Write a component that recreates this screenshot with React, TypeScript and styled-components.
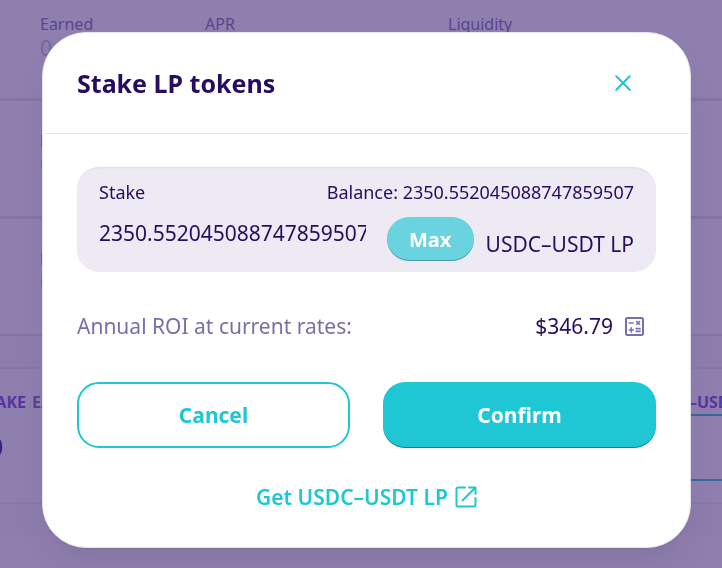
import React, { useState } from 'react';
import styled, { createGlobalStyle } from 'styled-components';

const colors = {
  text: '#280d5f',
  subtle: '#7a6eaa',
  primary: '#1fc7d4',
  secondary: '#7645d9',
  disabled: '#bdc2c4',
  border: '#e7e3eb',
  input: '#eeeaf4',
};

const GlobalStyle = createGlobalStyle`
  *, *::before, *::after { box-sizing: border-box; }
  body {
    margin: 0;
    background: #fff;
    color: ${colors.text};
    font-family: 'Noto Sans', 'Open Sans', sans-serif;
  }
  button, input { font-family: inherit; }
`;

/* Farm list behind the dialog */

const Page = styled.main`
  height: 100vh;
  overflow: hidden;
  font-size: 16px;
  line-height: 24px;
`;

const FarmRow = styled.section<{ $first?: boolean; $open?: boolean }>`
  display: grid;
  grid-template-columns: 165px 243px 1fr;
  align-items: start;
  height: ${p => (p.$first ? 101 : p.$open ? 117 : 118)}px;
  padding: ${p => (p.$first ? 12 : 28)}px 0 0 40px;
  border-bottom: ${p => (p.$open ? 2 : 3)}px solid ${colors.border};
`;

const Label = styled.div`
  color: ${colors.subtle};
`;

const Faint = styled.div`
  color: ${colors.disabled};
  font-size: 21px;
`;

const Details = styled.section`
  padding: 31px 0;
  background: #faf9fa;
`;

const DetailsGrid = styled.div`
  display: grid;
  grid-template-columns: 646px 1fr;
  height: 137px;
  padding-top: 21px;
  background: #fff;
  border: solid ${colors.input};
  border-width: 2px 0;
  font-weight: 700;
  white-space: nowrap;
`;

const EarnedTitle = styled.div`
  display: flex;
  gap: 6px;
  color: ${colors.subtle};
`;

const TokenName = styled.span`
  display: flex;
  justify-content: flex-end;
  width: 26px;
  color: ${colors.secondary};
`;

const EarnedValue = styled.div`
  display: flex;
  justify-content: flex-end;
  width: 3px;
  margin-top: 16px;
  font-size: 26px;
  line-height: 32px;
  font-weight: 600;
`;

const StakedTitle = styled.div`
  color: ${colors.secondary};
`;

const StakedBox = styled.div`
  height: 67px;
  border: 2px solid ${colors.primary};
  border-right: 0;
  border-radius: 18px 0 0 18px;
`;

/* Dialog */

const Overlay = styled.div`
  position: fixed;
  inset: 0;
  display: flex;
  flex-direction: column;
  padding: 32px 31px 20px 42px;
  background: rgba(69, 42, 122, 0.6);
`;

const Dialog = styled.div`
  overflow: hidden;
  background: #fff;
  border: 1px solid ${colors.border};
  border-radius: 44px;
  box-shadow: 0 20px 36px -8px rgba(14, 14, 44, 0.1), 0 1px 1px rgba(0, 0, 0, 0.05);
`;

const Header = styled.header`
  display: flex;
  align-items: center;
  justify-content: space-between;
  height: 101px;
  margin: 0 1px;
  padding: 0 40px 0 33px;
  border-bottom: 1px solid ${colors.border};
`;

const Title = styled.h2`
  margin: 0;
  font-size: 25px;
  line-height: 32px;
  font-weight: 700;
`;

const CloseButton = styled.button`
  display: grid;
  place-items: center;
  width: 52px;
  height: 52px;
  padding: 0;
  border: 0;
  background: none;
  color: ${colors.primary};
  cursor: pointer;
`;

const Body = styled.div`
  padding: 33px 34px 34px;
`;

const StakeField = styled.div`
  height: 105px;
  padding: 12px 22px 0;
  background: ${colors.input};
  border-radius: 22px;
  box-shadow: inset 0 2px 2px -1px rgba(74, 74, 104, 0.1);
`;

const FieldTop = styled.div`
  display: flex;
  justify-content: space-between;
  font-size: 18px;
  line-height: 26px;
`;

const FieldBottom = styled.div`
  display: flex;
  align-items: center;
  margin-top: 12px;
  font-size: 21px;
  line-height: 32px;
`;

const AmountInput = styled.input`
  flex: 1;
  min-width: 0;
  height: 32px;
  margin: 0 21px 12px 0;
  padding: 0;
  border: 0;
  outline: 0;
  background: none;
  color: ${colors.text};
  font-size: 21px;
`;

const MaxButton = styled.button`
  width: 87px;
  height: 44px;
  margin-right: 12px;
  padding: 0;
  border: 0;
  border-radius: 22px;
  background: #69d3df;
  box-shadow: inset 0 -1px 0 rgba(14, 14, 44, 0.3);
  color: #fff;
  font-size: 20px;
  font-weight: 700;
  cursor: pointer;
`;

const Unit = styled.span`
  padding-top: 10px;
  white-space: nowrap;
`;

const RoiRow = styled.div`
  display: flex;
  align-items: center;
  margin-top: 38px;
  padding-right: 12px;
  font-size: 21px;
  line-height: 32px;
`;

const RoiLabel = styled.span`
  flex: 1;
  color: ${colors.subtle};
`;

const RoiButton = styled.button`
  display: flex;
  margin-left: 12px;
  padding: 0;
  border: 0;
  background: none;
  color: ${colors.subtle};
  cursor: pointer;
`;

const Actions = styled.div`
  display: grid;
  grid-template-columns: 1fr 1fr;
  gap: 33px;
  margin-top: 40px;
`;

const ActionButton = styled.button<{ $outlined?: boolean }>`
  height: 66px;
  padding: 0;
  border: ${p => (p.$outlined ? `2px solid ${colors.primary}` : '0')};
  border-radius: 22px;
  background: ${p => (p.$outlined ? 'transparent' : colors.primary)};
  box-shadow: ${p => (p.$outlined ? 'none' : 'inset 0 -1px 0 rgba(14, 14, 44, 0.4)')};
  color: ${p => (p.$outlined ? colors.primary : '#fff')};
  font-size: 21px;
  font-weight: 700;
  cursor: pointer;
`;

const GetLink = styled.a`
  display: flex;
  align-items: center;
  justify-content: center;
  gap: 7px;
  width: fit-content;
  margin: 33px auto 0;
  color: ${colors.primary};
  font-size: 21px;
  line-height: 32px;
  font-weight: 600;
  text-decoration: none;
`;

const CloseIcon = () => (
  <svg width="16" height="16" viewBox="0 0 16 16" fill="none" stroke="currentColor" strokeWidth="2" strokeLinecap="round" aria-hidden="true">
    <path d="M1.3 1.3 14.7 14.7M14.7 1.3 1.3 14.7" />
  </svg>
);

const CalculatorIcon = () => (
  <svg width="19" height="19" viewBox="0 0 19 19" fill="none" stroke="currentColor" aria-hidden="true">
    <rect x="1" y="1" width="17" height="17" rx="1.5" strokeWidth="2" />
    <path d="M3.7 6H8.7M3.6 13H9M6.3 10.3V15.7M10.5 11.6H15.7M10.5 14.4H15.7M11.2 4 15 7.8M15 4 11.2 7.8" strokeWidth="1.6" />
  </svg>
);

const OpenIcon = () => (
  <svg width="22" height="22" viewBox="0 0 22 22" fill="none" stroke="currentColor" strokeWidth="2" strokeLinecap="round" strokeLinejoin="round" aria-hidden="true">
    <path d="M10 1.5H3A1.5 1.5 0 0 0 1.5 3V19A1.5 1.5 0 0 0 3 20.5H19A1.5 1.5 0 0 0 20.5 19V12" />
    <path d="M14 1.5H20.5V8M20.5 1.5 7.5 14.5" />
  </svg>
);

const BALANCE = '2350.552045088747859507';

export default function App() {
  const [amount, setAmount] = useState(BALANCE);
  return (
    <>
      <GlobalStyle />
      <Page>
        {[0, 1, 2].map(row => (
          <FarmRow key={row} $first={row === 0} $open={row === 2}>
            <div>
              <Label>Earned</Label>
              <Faint>0</Faint>
            </div>
            <Label>APR</Label>
            <Label>Liquidity</Label>
          </FarmRow>
        ))}
        <Details>
          <DetailsGrid>
            <div>
              <EarnedTitle>
                <TokenName>CAKE</TokenName>EARNED
              </EarnedTitle>
              <EarnedValue>0</EarnedValue>
            </div>
            <div>
              <StakedTitle>USDC–USDT LP</StakedTitle>
              <StakedBox />
            </div>
          </DetailsGrid>
        </Details>
      </Page>
      <Overlay>
        <Dialog role="dialog" aria-modal="true" aria-labelledby="stake-title">
          <Header>
            <Title id="stake-title">Stake LP tokens</Title>
            <CloseButton aria-label="Close the dialog">
              <CloseIcon />
            </CloseButton>
          </Header>
          <Body>
            <StakeField>
              <FieldTop>
                <label htmlFor="amount">Stake</label>
                <span>Balance: {BALANCE}</span>
              </FieldTop>
              <FieldBottom>
                <AmountInput id="amount" inputMode="decimal" value={amount} onChange={e => setAmount(e.target.value)} />
                <MaxButton onClick={() => setAmount(BALANCE)}>Max</MaxButton>
                <Unit>USDC–USDT LP</Unit>
              </FieldBottom>
            </StakeField>
            <RoiRow>
              <RoiLabel>Annual ROI at current rates:</RoiLabel>
              <span>$346.79</span>
              <RoiButton aria-label="Open ROI calculator">
                <CalculatorIcon />
              </RoiButton>
            </RoiRow>
            <Actions>
              <ActionButton $outlined>Cancel</ActionButton>
              <ActionButton>Confirm</ActionButton>
            </Actions>
            <GetLink href="#get-lp">
              Get USDC–USDT LP
              <OpenIcon />
            </GetLink>
          </Body>
        </Dialog>
      </Overlay>
    </>
  );
}
